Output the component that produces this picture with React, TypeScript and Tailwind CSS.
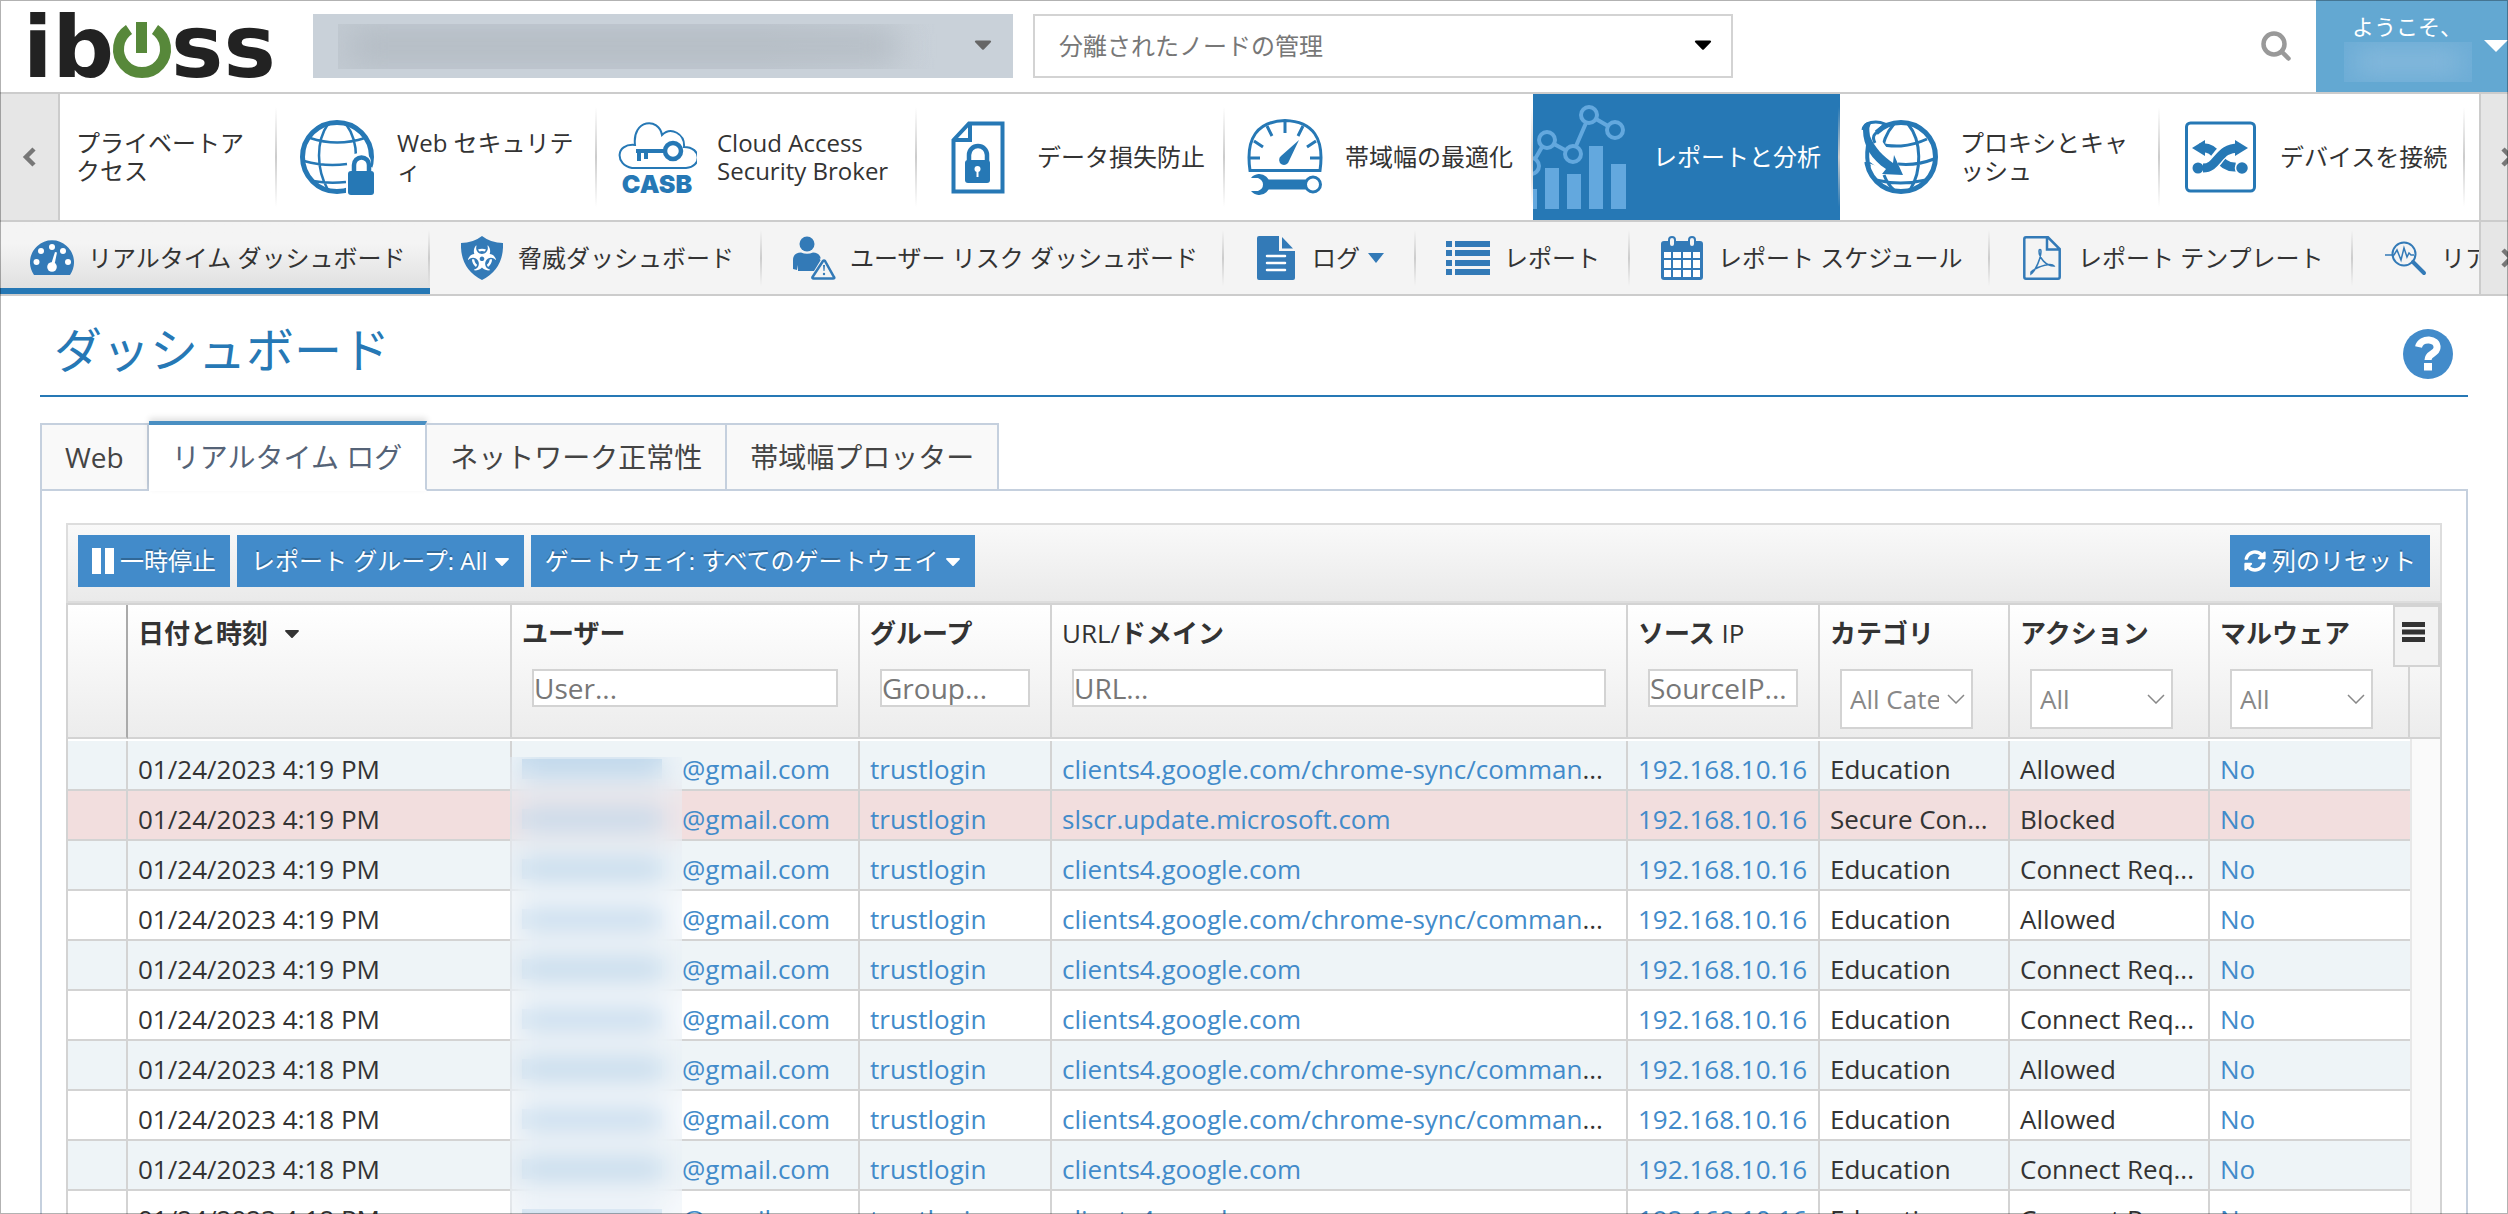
import { useState, type ReactNode } from 'react';
import { clsx } from 'clsx';
import { FaBiohazard, FaCaretDown, FaSyncAlt } from 'react-icons/fa';

function Logo() {
  return (
    <svg viewBox="0 0 250 68" className="w-[250px] h-[68px] overflow-visible" role="img" aria-label="iboss">
      <g fill="#222" fontFamily="DejaVu Sans" fontWeight="700">
        <text x="-7" y="65" fontSize="86">ib</text>
        <text x="141" y="65" fontSize="88">ss</text>
      </g>
      <path d="M99 17.500A23.500 23.500 0 1 0 125 17.500" fill="none" stroke="#57883a" strokeWidth="11" />
      <rect x="106" y="10" width="11" height="31" fill="#57883a" />
    </svg>
  );
}

function GlobeLockIcon() {
  return (
    <svg viewBox="0 0 80 80" className="w-20 h-20" fill="none" stroke="#2678b5" strokeWidth="2.5">
      <circle cx="40" cy="40" r="34.500" strokeWidth="5" />
      <path d="M31 7C19 24 19 52 31 73M49 7C57 18 59 28 59 40M13 21Q40 30 68 21M7 44Q28 50 50 47M16 64Q32 67 49 65" />
      <path d="M49 80V54q0-3 3-4v-4q0-10 11-10t11 10v4q4 1 4 4v26z" fill="#fff" stroke="none" />
      <path d="M57 56v-8a7.500 7.500 0 0 1 15 0v8" strokeWidth="4.500" />
      <rect x="51" y="54" width="26" height="24" rx="3" fill="#2678b5" stroke="none" />
    </svg>
  );
}

function CasbIcon() {
  return (
    <svg viewBox="0 0 80 80" className="w-20 h-20" fill="none" stroke="#2678b5">
      <path
        d="M15 51C-2 48-2 26 18 28C15 2 42 0 45 18C54 9 68 17 67 30C85 30 85 50 69 51Z"
        strokeWidth="2"
      />
      <circle cx="56" cy="34" r="8" strokeWidth="4.500" />
      <path d="M19 34h29M22 34v10M29 34v8" strokeWidth="4" />
      <text x="40" y="76" textAnchor="middle" fill="#2678b5" stroke="none" fontFamily="Inter" fontWeight="900" fontSize="25">
        CASB
      </text>
    </svg>
  );
}

function FileLockIcon() {
  return (
    <svg viewBox="0 0 80 80" className="w-20 h-20" fill="none" stroke="#2678b5" strokeWidth="4">
      <path d="M16.500 23L32 6.500H65.500V74.500H16.500zM16.500 23H33V6.500" />
      <path d="M32 44v-6a9 9 0 0 1 18 0v6" strokeWidth="4.500" />
      <rect x="28" y="43" width="25" height="23" rx="3" fill="#2678b5" stroke="none" />
      <circle cx="40.500" cy="52" r="3" fill="#fff" stroke="none" />
      <path d="M40.500 52v8" stroke="#fff" strokeWidth="2" />
    </svg>
  );
}

function SpeedIcon() {
  return (
    <svg viewBox="0 0 80 80" className="w-20 h-20" fill="none" stroke="#2678b5" strokeWidth="3">
      <path d="M5 53.500Q-2 5 40 3.500Q82 5 75 53.500Z" />
      <path d="M40 5v11M22 9l5 10M58 9l-5 10M9 24l9 6M71 24l-9 6M5 41h10M75 41h-10" />
      <path d="M54 23L36 39a5 5 0 1 0 8 5z" fill="#2678b5" stroke="none" />
      <path d="M19 62.500h44v10H19z" fill="#2678b5" stroke="none" />
      <path d="M6 61a10.500 10.500 0 1 1 0 13h7q5-2 5-6.500t-5-6.500z" fill="#2678b5" stroke="none" />
      <circle cx="68" cy="67.500" r="7.500" fill="#fff" />
    </svg>
  );
}

function AnalyticsIcon() {
  return (
    <svg viewBox="0 0 100 126" className="w-[100px] h-[126px]" fill="#63a8de" stroke="none">
      <path d="M0 95h4v20H0zM12 74h14v41H12zM34 80h14v35H34zM56 52h14v63H56zM78 70h15v45H78z" />
      <g fill="none" stroke="#63a8de" strokeWidth="4">
        <circle cx="-2" cy="72" r="8" />
        <circle cx="14" cy="46" r="8" />
        <circle cx="40" cy="60" r="8" />
        <circle cx="56" cy="21" r="8" />
        <circle cx="82" cy="36" r="8" />
        <path d="M2 65l7-12M21 50l11 6M43 52l10-23M63 25l12 7" />
      </g>
    </svg>
  );
}

function GlobeArrowIcon() {
  return (
    <svg viewBox="0 0 80 80" className="w-20 h-20" fill="none" stroke="#2678b5" strokeWidth="3">
      <circle cx="41" cy="40" r="34.500" strokeWidth="5" />
      <path d="M34 7C26 16 22 27 21 40M48 7C62 24 62 54 50 73M14 19Q15 30 41 29Q54 28 67 22M38 47Q56 49 74 42M10 45L19 48M16 63Q40 69 66 63M24 58Q28 68 34 73" />
      <path d="M9 5H1v40h9L30 60l14-4z" fill="#fff" stroke="none" />
      <path d="M3 13C4 5 16 3 25 7L15 17Q12 20 15 26" />
      <path d="M3 13Q2 4 12 5Q8 9 10 19C14 30 24 40 33 46L34 38L43 58L22 57L26 52C12 43 3 29 3 13z" fill="#2678b5" stroke="none" />
      <path d="M8 28Q6 42 9 50" strokeWidth="4" />
    </svg>
  );
}

function ShuffleIcon() {
  return (
    <svg viewBox="0 0 80 80" className="w-20 h-20" fill="none" stroke="#2678b5">
      <rect x="6.500" y="6" width="68" height="68" rx="4" strokeWidth="3" />
      <path d="M20 31Q31 29 37 39Q45 51 56 50" strokeWidth="9" />
      <path d="M23 50.500C38 52 37 28 58 31" stroke="#fff" strokeWidth="13" />
      <path d="M23 51C39 51 37 30 60 31" strokeWidth="9" />
      <path d="M12 31l13-8v16zM68 31l-13-8v16z" fill="#2678b5" stroke="none" />
      <circle cx="18" cy="51" r="5.500" fill="#2678b5" stroke="none" />
      <circle cx="62" cy="51" r="6.500" fill="#2678b5" stroke="#fff" strokeWidth="1.500" />
    </svg>
  );
}

function GaugeIcon() {
  return (
    <svg viewBox="0 0 44 36" className="w-11 h-9">
      <path d="M4 35A22 22 0 1 1 40 35z" fill="#337ab7" />
      <g fill="#fff">
        <circle cx="6.500" cy="22" r="3" />
        <circle cx="11" cy="11" r="3" />
        <circle cx="22" cy="7" r="3" />
        <circle cx="33" cy="11" r="3" />
        <circle cx="38" cy="22" r="3" />
        <circle cx="22" cy="27" r="4.800" />
        <path d="M20.500 26L25 12l2 .5L24 27z" />
      </g>
    </svg>
  );
}

function ShieldIcon() {
  return (
    <span className="grid place-items-center text-white">
      <svg viewBox="0 0 42 44" className="col-start-1 row-start-1 w-[42px] h-11">
        <path d="M21 0Q30 7 42 7Q43 33 21 44Q-1 33 0 7Q12 7 21 0z" fill="#337ab7" />
      </svg>
      <FaBiohazard className="col-start-1 row-start-1 size-7" />
    </span>
  );
}

function UserRiskIcon() {
  return (
    <svg viewBox="0 0 44 44" className="size-11" fill="#337ab7">
      <circle cx="15" cy="8" r="7.500" />
      <path d="M1 33V24Q1 17 9 16.500Q15 19 21 16.500Q29 17 29 25V35H6v-6l-1 5z" />
      <path
        d="M32 25L42 41.500Q42 42.500 41 42.500H22Q20.500 42.500 21 41.500L31 25q1-1 2 0z"
        fill="#f4f4f4"
        stroke="#f4f4f4"
        strokeWidth="5"
      />
      <path d="M31 25L20.500 41Q20 42.500 21.500 42.500H41Q43 42.500 42 41L33 25q-1-1-2 0z" fill="#f4f4f4" stroke="#337ab7" strokeWidth="2.500" />
      <path d="M31 29h2l-.5 6h-1z" />
      <circle cx="32" cy="38" r="1.200" />
    </svg>
  );
}

function LogIcon() {
  return (
    <svg viewBox="0 0 38 44" className="w-[38px] h-11" fill="#337ab7">
      <path d="M2 0H22V15H38V42q0 2-2 2H2q-2 0-2-2V2q0-2 2-2z" />
      <path d="M25 1L36 12.500H25z" />
      <path d="M10 20h18M10 27h18M10 34h18" stroke="#fff" strokeWidth="2.500" strokeLinecap="round" />
    </svg>
  );
}

function ListIcon() {
  return (
    <svg viewBox="0 0 44 36" className="w-11 h-9" fill="#337ab7">
      <path d="M0 1h6v6H0zM9 1h35v6H9zM0 10h6v6H0zM9 10h35v6H9zM0 20h6v6H0zM9 20h35v6H9zM0 29h6v6H0zM9 29h35v6H9z" />
    </svg>
  );
}

function CalendarIcon() {
  return (
    <svg viewBox="0 0 42 44" className="w-[42px] h-11" fill="#337ab7">
      <rect x="0" y="5" width="42" height="39" rx="3" />
      <path d="M3 16h7v6H3zM12 16h8v6h-8zM22 16h8v6h-8zM32 16h7v6h-7zM3 24h7v8H3zM12 24h8v8h-8zM22 24h8v8h-8zM32 24h7v8h-7zM3 34h7v7H3zM12 34h8v7h-8zM22 34h8v7h-8zM32 34h7v7h-7z" fill="#fff" />
      <rect x="8" y="1" width="6" height="10" rx="3" fill="#f4f4f4" stroke="#337ab7" strokeWidth="2" />
      <rect x="28" y="1" width="6" height="10" rx="3" fill="#f4f4f4" stroke="#337ab7" strokeWidth="2" />
    </svg>
  );
}

function PdfIcon() {
  return (
    <svg viewBox="0 0 38 44" className="w-[38px] h-11" fill="none" stroke="#337ab7" strokeWidth="2.500">
      <path d="M3 1.300H25L36.700 13V41q0 1.700-1.700 1.700H3q-1.700 0-1.700-1.700V3q0-1.700 1.700-1.700zM24 1.300V13.500H36.700" />
      <path d="M8 38C13 34 18 22 18 15c0-2-2-2-2 0C16 22 23 30 31 30C29 27 16 29 8 36z" strokeWidth="1.500" />
    </svg>
  );
}

function SearchWaveIcon() {
  return (
    <svg viewBox="0 0 44 36" className="w-11 h-9" fill="none" stroke="#337ab7" strokeWidth="1.500">
      <circle cx="21" cy="14" r="11.500" strokeWidth="2" />
      <path d="M2 15h9l3-5 4 10 3-12 3 9 2-4 2 2h3" />
      <path d="M30 22l11 11" strokeWidth="4" strokeLinecap="round" />
    </svg>
  );
}

function Chevron({ d }: { d: string }) {
  return (
    <svg viewBox="0 0 14 20" className="w-3.5 h-5 shrink-0" fill="none" stroke="#777" strokeWidth="4.500">
      <path d={d} />
    </svg>
  );
}

interface NavItem {
  label: string;
  icon?: ReactNode;
  width: string;
  active?: boolean;
}

const navItems: NavItem[] = [
  { label: 'プライベートア\nクセス', width: 'w-[217px]' },
  { label: 'Web セキュリテ\nィ', icon: <GlobeLockIcon />, width: 'w-[320px]' },
  { label: 'Cloud Access\nSecurity Broker', icon: <CasbIcon />, width: 'w-[320px]' },
  { label: 'データ損失防止', icon: <FileLockIcon />, width: 'w-[308px]' },
  { label: '帯域幅の最適化', icon: <SpeedIcon />, width: 'w-[308px]' },
  { label: 'レポートと分析', icon: <AnalyticsIcon />, width: 'w-[307px]', active: true },
  { label: 'プロキシとキャ\nッシュ', icon: <GlobeArrowIcon />, width: 'w-[320px]' },
  { label: 'デバイスを接続', icon: <ShuffleIcon />, width: 'w-[305px]' },
];

const subItems: NavItem[] = [
  { label: 'リアルタイム ダッシュボード', icon: <GaugeIcon />, width: 'w-[430px]', active: true },
  { label: '脅威ダッシュボード', icon: <ShieldIcon />, width: 'w-[332px]' },
  { label: 'ユーザー リスク ダッシュボード', icon: <UserRiskIcon />, width: 'w-[462px]' },
  { label: 'ログ', icon: <LogIcon />, width: 'w-[192px]' },
  { label: 'レポート', icon: <ListIcon />, width: 'w-[214px]' },
  { label: 'レポート スケジュール', icon: <CalendarIcon />, width: 'w-[360px]' },
  { label: 'レポート テンプレート', icon: <PdfIcon />, width: 'w-[363px]' },
  { label: 'リア', icon: <SearchWaveIcon />, width: 'w-[300px]' },
];

const tabs = ['Web', 'リアルタイム ログ', 'ネットワーク正常性', '帯域幅プロッター'];

const SYNC_URL = 'clients4.google.com/chrome-sync/comman';
const HOST = 'clients4.google.com';

const logs = [
  { time: '4:19 PM', url: SYNC_URL, category: 'Education', action: 'Allowed' },
  { time: '4:19 PM', url: 'slscr.update.microsoft.com', category: 'Secure Con...', action: 'Blocked' },
  { time: '4:19 PM', url: HOST, category: 'Education', action: 'Connect Req...' },
  { time: '4:19 PM', url: SYNC_URL, category: 'Education', action: 'Allowed' },
  { time: '4:19 PM', url: HOST, category: 'Education', action: 'Connect Req...' },
  { time: '4:18 PM', url: HOST, category: 'Education', action: 'Connect Req...' },
  { time: '4:18 PM', url: SYNC_URL, category: 'Education', action: 'Allowed' },
  { time: '4:18 PM', url: SYNC_URL, category: 'Education', action: 'Allowed' },
  { time: '4:18 PM', url: HOST, category: 'Education', action: 'Connect Req...' },
  { time: '4:18 PM', url: HOST, category: 'Education', action: 'Connect Req...' },
];

function Divider({ className }: { className: string }) {
  return <span className={clsx('w-0.5 shrink-0 bg-linear-to-b from-transparent via-[#ccc] to-transparent', className)} />;
}

function ToolbarButton({ children }: { children: ReactNode }) {
  return (
    <button className="h-[52px] px-3.5 flex items-center gap-1.5 bg-[#428bca] text-white text-2xl [text-shadow:0_-2px_0_rgba(0,0,0,0.25)]">
      {children}
    </button>
  );
}

function TextFilter({ label, placeholder }: { label: string; placeholder: string }) {
  return (
    <input
      type="text"
      aria-label={label}
      placeholder={placeholder}
      className="block mt-4 mx-2.5 w-[calc(100%-20px)] h-[38px] border-2 border-[#d3d3d3] bg-white text-[28px] font-normal placeholder:text-[#777]"
    />
  );
}

function SelectFilter({ label, value, width }: { label: string; value: string; width: string }) {
  return (
    <span className={clsx('relative block mt-4 ml-2.5', width)}>
      <select
        aria-label={label}
        className="block w-full h-[60px] pl-2 pr-8 appearance-none border-2 border-[#d3d3d3] bg-white text-[26px] font-normal text-[#888]"
      >
        <option>{value}</option>
      </select>
      <svg viewBox="0 0 18 10" className="absolute right-2 top-[25px] w-[18px] h-2.5" fill="none" stroke="#888" strokeWidth="1.500">
        <path d="M1 1l8 8 8-8" />
      </svg>
    </span>
  );
}

const headCell = 'h-[134px] px-2.5 pt-2 align-top text-left border-r-2 border-b-2 border-[#d3d3d3] leading-10';
const bodyCell = 'h-[50px] px-2.5 pt-2 leading-10 truncate border-r-2 border-b-2 border-[#d3d3d3]';

export default function App() {
  const [tab, setTab] = useState(1);

  return (
    <div className="relative h-screen overflow-hidden bg-white text-[#333] font-['Open_Sans','Noto_Sans_CJK_JP',sans-serif]">
      {/* Header */}
      <header className="h-[94px] pl-[30px] flex items-center border-b-2 border-[#ccc]">
        <a href="#home" className="w-[283px] shrink-0">
          <Logo />
        </a>
        <div className="relative w-[700px]">
          <select aria-label="Account" className="block w-full h-16 appearance-none bg-[#c9d1d9]">
            <option></option>
          </select>
          <div className="absolute left-[25px] right-[75px] top-2.5 h-[45px] overflow-hidden pointer-events-none bg-linear-to-r from-[#c2cad2] from-70% to-[#c9d1d9]">
            <div className="ml-3 mr-10 mt-2 h-7 bg-[#b1b9c1] blur-lg" />
          </div>
          <FaCaretDown className="absolute right-4 top-4 size-7 text-[#666] pointer-events-none" />
        </div>
        <div className="relative w-[700px] ml-5">
          <select
            aria-label="Node"
            className="block w-full h-16 px-6 appearance-none border-2 border-[#d3d3d3] bg-white text-2xl text-[#777]"
          >
            <option>分離されたノードの管理</option>
          </select>
          <FaCaretDown className="absolute right-4 top-4 size-7 text-black pointer-events-none" />
        </div>
        <button aria-label="Search" className="ml-auto mr-6">
          <svg viewBox="0 0 32 32" className="size-8" fill="none" stroke="#999" strokeWidth="4.500">
            <circle cx="14" cy="14" r="10.500" />
            <path d="M21.500 21.500l7 7" strokeLinecap="round" />
          </svg>
        </button>
        <button className="relative w-48 h-full pl-7 pt-2.5 flex flex-col items-start bg-[#63a8d2] text-white text-[22px] leading-8">
          <span className="pl-2">ようこそ、</span>
          <span className="w-32 h-10 overflow-hidden bg-[#6dadd6]">
            <span className="block mx-3 mt-2 h-6 bg-[#86b9dc] blur-md" />
          </span>
          <svg viewBox="0 0 24 12" className="absolute right-0 top-10 w-6 h-3" fill="#fff">
            <path d="M0 0h24L12 12z" />
          </svg>
        </button>
      </header>

      {/* Main navigation */}
      <nav className="h-32 flex border-b-2 border-[#ccc] text-2xl leading-7">
        <button aria-label="Previous" className="w-[60px] shrink-0 flex justify-center items-center bg-[#e6e6e6] border-r-2 border-[#ccc]">
          <Chevron d="M12 2L4 10l8 8" />
        </button>
        <div className="flex-1 min-w-0 flex overflow-hidden">
          {navItems.map((item) => (
            <a
              key={item.label}
              href="#section"
              className={clsx('shrink-0 flex items-center', item.width, item.active && 'bg-[#2678b5] text-white')}
            >
              {item.icon ? (
                <span className={clsx('w-[100px] mr-5 shrink-0', !item.active && 'pl-5')}>{item.icon}</span>
              ) : (
                <span className="w-4" />
              )}
              <span className="flex-1 whitespace-pre-line">{item.label}</span>
              <Divider className="h-[100px]" />
            </a>
          ))}
        </div>
        <button aria-label="Next" className="w-[29px] pl-5 shrink-0 flex items-center overflow-hidden bg-[#e6e6e6] border-l-2 border-[#ccc]">
          <Chevron d="M2 2l8 8-8 8" />
        </button>
      </nav>

      {/* Section navigation */}
      <nav className="h-[74px] flex bg-[#f4f4f4] border-b-2 border-[#ccc] text-2xl">
        <div className="flex-1 min-w-0 flex overflow-hidden">
          {subItems.map((item) => (
            <a
              key={item.label}
              href="#page"
              className={clsx(
                'shrink-0 flex items-center whitespace-nowrap',
                item.width,
                item.active && 'bg-linear-to-b from-[#f4f4f4] from-30% to-[#dedede] shadow-[inset_0_-6px_0_#2678b5]'
              )}
            >
              <span className="w-11 ml-[30px] mr-3.5 shrink-0 flex justify-center">{item.icon}</span>
              <span className="flex-1 flex items-center gap-2">
                {item.label}
                {item.label === 'ログ' && (
                  <svg viewBox="0 0 16 10" className="w-4 h-2.5" fill="#337ab7">
                    <path d="M0 0h16L8 10z" />
                  </svg>
                )}
              </span>
              <Divider className="h-14" />
            </a>
          ))}
        </div>
        <button aria-label="Next" className="w-[29px] pl-5 shrink-0 flex items-center overflow-hidden bg-[#e6e6e6] border-l-2 border-[#ccc]">
          <Chevron d="M2 2l8 8-8 8" />
        </button>
      </nav>

      <main className="px-10">
        <div className="h-[101px] pl-3.5 pr-[15px] pt-2 flex items-center justify-between border-b-2 border-[#2678b5]">
          <h1 className="text-5xl text-[#2678b5]">ダッシュボード</h1>
          <button aria-label="Help" className="mt-2">
            <svg viewBox="0 0 50 50" className="size-[50px]" fill="none">
              <circle cx="25" cy="25" r="25" fill="#428bca" />
              <path d="M15.500 18C18 8 35 9 34 19C33.500 25 25 24 25 31" stroke="#fff" strokeWidth="7" />
              <rect x="21" y="34" width="8" height="7.500" fill="#fff" />
            </svg>
          </button>
        </div>

        {/* Tabs */}
        <div className="relative mt-6 h-[70px] -mb-0.5 flex items-end text-[28px] text-[#444]">
          {tabs.map((name, i) => (
            <button
              key={name}
              onClick={() => setTab(i)}
              className={clsx(
                'px-[23px] border-r-2 border-b-2 first:border-l-2',
                i === tab
                  ? 'h-[70px] border-t-4 border-t-[#4a8fc2] border-r-[#c5d0de] border-b-white bg-white text-[#556377] shadow-[0_-3px_6px_rgba(0,0,0,0.12)]'
                  : 'h-[68px] border-t-2 border-[#c5d0de] bg-[#f9f9f9]'
              )}
            >
              {name}
            </button>
          ))}
        </div>

        <section className="px-6 pt-8 border-2 border-[#c5d0de]">
          <div className="pt-2.5 px-2.5 pb-3.5 flex gap-[7px] border-2 border-[#ddd] bg-linear-to-b from-[#f9f9f9] to-[#eaeaea]">
            <ToolbarButton>
              <svg viewBox="0 0 22 26" className="w-[22px] h-[26px]" fill="#fff">
                <path d="M0 0h9v26H0zM13 0h9v26h-9z" />
              </svg>
              一時停止
            </ToolbarButton>
            <ToolbarButton>
              レポート グループ: All
              <FaCaretDown className="w-4 h-6" />
            </ToolbarButton>
            <ToolbarButton>
              ゲートウェイ: すべてのゲートウェイ
              <FaCaretDown className="w-4 h-6" />
            </ToolbarButton>
            <span className="ml-auto">
              <ToolbarButton>
                <FaSyncAlt className="size-[22px]" />
                列のリセット
              </ToolbarButton>
            </span>
          </div>

          <div className="relative border-x-2 border-t-2 border-[#d3d3d3]">
            <table className="w-full table-fixed border-separate border-spacing-0 text-[26px]">
              <colgroup>
                <col className="w-[60px]" />
                <col className="w-[384px]" />
                <col className="w-[348px]" />
                <col className="w-[192px]" />
                <col />
                <col className="w-[192px]" />
                <col className="w-[190px]" />
                <col className="w-[200px]" />
                <col className="w-[200px]" />
                <col className="w-[30px]" />
              </colgroup>
              <thead className="bg-linear-to-b from-white to-[#ececec]">
                <tr>
                  <th className={clsx(headCell, 'border-r-[#aaa]')}></th>
                  <th className={headCell}>
                    <span className="flex items-center gap-3">
                      日付と時刻
                      <FaCaretDown className="size-6" />
                    </span>
                  </th>
                  <th className={headCell}>
                    ユーザー
                    <TextFilter label="ユーザー" placeholder="User..." />
                  </th>
                  <th className={headCell}>
                    グループ
                    <TextFilter label="グループ" placeholder="Group..." />
                  </th>
                  <th className={headCell}>
                    <span className="font-normal">URL/</span>ドメイン
                    <TextFilter label="URL" placeholder="URL..." />
                  </th>
                  <th className={headCell}>
                    ソース <span className="font-normal">IP</span>
                    <TextFilter label="ソース IP" placeholder="SourceIP..." />
                  </th>
                  <th className={headCell}>
                    カテゴリ
                    <SelectFilter label="カテゴリ" value="All Categories" width="w-[133px]" />
                  </th>
                  <th className={headCell}>
                    アクション
                    <SelectFilter label="アクション" value="All" width="w-[143px]" />
                  </th>
                  <th className={headCell}>
                    マルウェア
                    <SelectFilter label="マルウェア" value="All" width="w-[143px]" />
                  </th>
                  <th className="border-b-2 border-[#d3d3d3]"></th>
                </tr>
              </thead>
              <tbody>
                <tr>
                  <td colSpan={9} className="h-0.5"></td>
                  <td rowSpan={logs.length + 1} className="border-l-2 border-[#e8e8e8] bg-[#fafafa]"></td>
                </tr>
                {logs.map((log, i) => (
                  <tr
                    key={i}
                    className={clsx(log.action === 'Blocked' ? 'bg-[#f2dede]' : i % 2 === 0 ? 'bg-[#eef4f7]' : 'bg-white')}
                  >
                    <td className={bodyCell}></td>
                    <td className={bodyCell}>01/24/2023 {log.time}</td>
                    <td className={bodyCell}>
                      <span className="flex items-center">
                        <span className="w-[140px] h-5 mr-5 bg-[#a6c8e4]" />
                        <a href="#user" className="text-[#428bca]">@gmail.com</a>
                      </span>
                    </td>
                    <td className={bodyCell}>
                      <a href="#group" className="text-[#428bca]">trustlogin</a>
                    </td>
                    <td className={bodyCell}>
                      <a href="#url" className="text-[#428bca]">{log.url}</a>
                      {log.url === SYNC_URL && '...'}
                    </td>
                    <td className={bodyCell}>
                      <a href="#ip" className="text-[#428bca]">192.168.10.16</a>
                    </td>
                    <td className={bodyCell}>{log.category}</td>
                    <td className={bodyCell}>{log.action}</td>
                    <td className="h-[50px] px-2.5 pt-2 leading-10 border-b-2 border-[#d3d3d3]">
                      <a href="#malware" className="text-[#428bca]">No</a>
                    </td>
                  </tr>
                ))}
              </tbody>
            </table>

            {/* User names are hidden behind a frosted strip */}
            <div className="absolute left-[442px] top-[152px] bottom-0 w-[172px] bg-[#e8eff7]/40 backdrop-blur-md" />

            <button
              aria-label="Columns"
              className="absolute right-0 top-0 w-[47px] h-[62px] pt-[15px] pl-[7px] flex items-start border-2 border-[#d3d3d3] bg-[#f3f3f3]"
            >
              <svg viewBox="0 0 23 20" className="w-[23px] h-5" fill="#333">
                <path d="M0 0h23v5H0zM0 7.500h23v5H0zM0 15h23v5H0z" />
              </svg>
            </button>
          </div>
        </section>
      </main>

      {/* Window frame */}
      <div className="absolute inset-0 border border-black/30 pointer-events-none" />
    </div>
  );
}
